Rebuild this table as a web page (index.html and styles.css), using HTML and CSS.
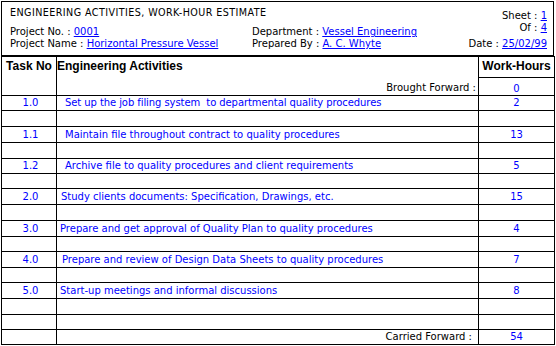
FILE: index.html
```html
<!DOCTYPE html>
<html>
<head>
<meta charset="utf-8">
<link rel="stylesheet" href="styles.css">
</head>
<body>
<div class="sheet">
  <div class="head">
    <div class="col-left">
      <div class="title">ENGINEERING ACTIVITIES, WORK-HOUR ESTIMATE</div>
      <div class="line first">Project No. : <a href="#">0001</a></div>
      <div class="line">Project Name : <a href="#">Horizontal Pressure Vessel</a></div>
    </div>
    <div class="col-mid">
      <div class="line first-mid">Department : <a href="#">Vessel Engineering</a></div>
      <div class="line">Prepared By : <a href="#">A. C. Whyte</a></div>
    </div>
    <div class="col-right">
      <div class="line sheet-no">Sheet : <a href="#">1</a></div>
      <div class="line">Of : <a href="#">4</a></div>
      <div class="line date">Date : <a href="#">25/02/99</a></div>
    </div>
  </div>
  <table class="grid">
    <colgroup><col class="c-task"><col class="c-act"><col class="c-hrs"></colgroup>
    <tr class="h1">
      <th rowspan="2" class="th-task">Task No</th>
      <th rowspan="2" class="th-act"><div class="th-act-in"><span>Engineering Activities</span><span class="fwd">Brought Forward :</span></div></th>
      <th class="th-hrs">Work-Hours</th>
    </tr>
    <tr class="h2"><td class="hrs bf">0</td></tr>
    <tr class="r15"><td class="task">1.0</td><td class="act i5 tight">Set up the job filing system&nbsp; to departmental quality procedures</td><td class="hrs">2</td></tr>
    <tr class="r16"><td></td><td></td><td></td></tr>
    <tr class="r16"><td class="task">1.1</td><td class="act i5">Maintain file throughout contract to quality procedures</td><td class="hrs">13</td></tr>
    <tr class="r16"><td></td><td></td><td></td></tr>
    <tr class="r15"><td class="task">1.2</td><td class="act i5">Archive file to quality procedures and client requirements</td><td class="hrs">5</td></tr>
    <tr class="r15"><td></td><td></td><td></td></tr>
    <tr class="r16"><td class="task">2.0</td><td class="act i1">Study clients documents: Specification, Drawings, etc.</td><td class="hrs">15</td></tr>
    <tr class="r16"><td></td><td></td><td></td></tr>
    <tr class="r16"><td class="task">3.0</td><td class="act i0">Prepare and get approval of Quality Plan to quality procedures</td><td class="hrs">4</td></tr>
    <tr class="r15"><td></td><td></td><td></td></tr>
    <tr class="r16"><td class="task">4.0</td><td class="act i2">Prepare and review of Design Data Sheets to quality procedures</td><td class="hrs">7</td></tr>
    <tr class="r15"><td></td><td></td><td></td></tr>
    <tr class="r16"><td class="task">5.0</td><td class="act i0">Start-up meetings and informal discussions</td><td class="hrs">8</td></tr>
    <tr class="r16"><td></td><td></td><td></td></tr>
    <tr class="r15"><td></td><td></td><td></td></tr>
    <tr class="r15"><td></td><td class="cf">Carried Forward :</td><td class="hrs">54</td></tr>
  </table>
</div>
</body>
</html>
```
FILE: styles.css
```css
html, body {
  margin: 0;
  padding: 0;
  background: #ffffff;
}
body {
  font-family: "DejaVu Sans", Verdana, sans-serif;
  font-size: 10px;
  color: #000000;
}
.sheet {
  margin: 1px 0 0 1px;
  width: 553px;
}
.head {
  display: flex;
  height: 55px;
  box-sizing: border-box;
  padding: 5px 6px 0 8px;
  border: 1px solid #000;
  line-height: 12px;
}
.col-left { flex: 0 0 242px; min-width: 0; }
.col-mid { flex: 1 1 auto; }
.col-right { text-align: right; }
.title {
  white-space: nowrap;
  font-size: 9.6px;
  letter-spacing: 0.42px;
}
.line { white-space: nowrap; }
.first { margin-top: 7px; }
.first-mid { margin-top: 19px; }
.sheet-no { margin-top: 3px; }
.date { margin-top: 4px; }
a { color: #0000ff; text-decoration: underline; }

.grid {
  width: 553px;
  border-collapse: collapse;
  table-layout: fixed;
}
.c-task { width: 55px; }
.c-act { width: 422px; }
.c-hrs { width: 76px; }
.grid th, .grid td {
  border: 1px solid #000;
  padding: 0;
  white-space: nowrap;
  overflow: hidden;
  line-height: 12px;
}
.grid th {
  font-family: "Liberation Sans", Arial, sans-serif;
  font-size: 12px;
  font-weight: bold;
  vertical-align: top;
  line-height: 14px;
  padding-top: 2px;
}
.h1 { height: 21px; }
.h2 { height: 18px; }
.th-task { text-align: center; }
.th-act { text-align: left; padding-left: 6px; }
.th-act-in {
  display: flex;
  flex-direction: column;
  justify-content: space-between;
  height: 35px;
}
.fwd {
  font-family: "DejaVu Sans", Verdana, sans-serif;
  font-size: 10px;
  font-weight: normal;
  text-align: right;
  line-height: 12px;
  padding-right: 2px;
}
.th-hrs { text-align: center; }
.bf { vertical-align: bottom; }
.r16 { height: 16px; }
.r15 { height: 15px; }
.task { text-align: center; color: #0000ff; padding-left: 3px !important; }
.act { color: #0000ff; }
.tight { letter-spacing: -0.08px; }
.i0 { padding-left: 3px !important; }
.i1 { padding-left: 4px !important; }
.i2 { padding-left: 5px !important; }
.i5 { padding-left: 8px !important; }
.hrs { text-align: center; color: #0000ff; }
.cf { text-align: right; padding-right: 6px !important; }
```
